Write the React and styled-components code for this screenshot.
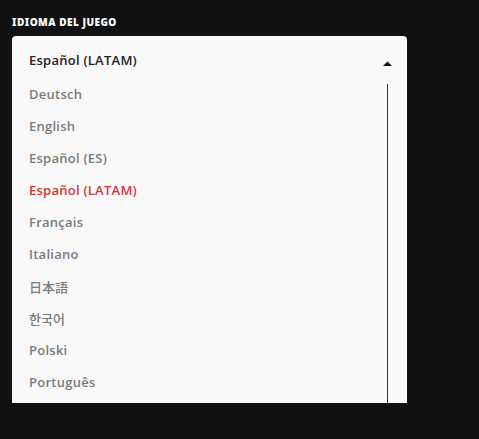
import React from "react";
import styled, { createGlobalStyle } from "styled-components";

const Global = createGlobalStyle`
  html, body { margin: 0; padding: 0; background: #111111; }
  body { width: 479px; height: 439px; overflow: hidden; font-family: "Open Sans", "Noto Sans", sans-serif; }
`;

const Page = styled.div`
  padding: 16px 72px 0 12px;
`;

const Label = styled.div`
  font-family: "Noto Sans", Inter, sans-serif;
  font-weight: 900;
  font-size: 10px;
  line-height: 12px;
  color: #ffffff;
  letter-spacing: 0.5px;
  margin-bottom: 8px;
`;

const Panel = styled.div`
  background: #f9f9f9;
  border-radius: 4px 4px 0 0;
  height: 367px;
  display: flex;
  flex-direction: column;
  overflow: hidden;
`;

const Header = styled.div`
  box-sizing: border-box;
  display: flex;
  align-items: flex-start;
  justify-content: space-between;
  height: 42px;
  padding: 15px 15px 0 17px;
  flex-shrink: 0;
`;

const Current = styled.span`
  font-size: 13px;
  line-height: 18px;
  font-weight: 600;
  letter-spacing: 0.25px;
  color: #222228;
`;

const Arrow = styled.svg`
  width: 9px;
  height: 5px;
  display: block;
  margin-top: 10px;
`;

const Body = styled.div`
  display: flex;
  flex: 1;
  min-height: 0;
`;

const List = styled.ul`
  list-style: none;
  margin: 0;
  padding: 0 0 0 17px;
  flex: 1;
`;

const Item = styled.li`
  height: 32px;
  display: flex;
  align-items: center;
  font-size: 13px;
  letter-spacing: ${(p) => (p.$cjk ? "0" : "0.25px")};
  color: ${(p) => (p.$active ? "#d13639" : "#7b7b7b")};
  font-family: ${(p) => (p.$cjk ? '"Noto Sans CJK JP", "Noto Sans CJK KR", sans-serif' : '"Open Sans", sans-serif')};
  font-weight: ${(p) => (p.$cjk ? 500 : 600)};
`;

const ScrollTrack = styled.div`
  width: 1px;
  background: #333;
  margin: 6px 19px 0 0;
`;

const langs = [
  { t: "Deutsch" },
  { t: "English" },
  { t: "Español (ES)" },
  { t: "Español (LATAM)", active: true },
  { t: "Français" },
  { t: "Italiano" },
  { t: "日本語", cjk: true },
  { t: "한국어", cjk: true },
  { t: "Polski" },
  { t: "Português" },
];

export default function App() {
  return (
    <>
      <Global />
      <Page>
        <Label>IDIOMA DEL JUEGO</Label>
        <Panel>
          <Header>
            <Current>Español (LATAM)</Current>
            <Arrow viewBox="0 0 9 5">
              <path d="M0 5 L4.5 0.5 L9 5 Z" fill="#111" />
            </Arrow>
          </Header>
          <Body>
            <List>
              {langs.map((l) => (
                <Item key={l.t} $active={l.active} $cjk={l.cjk}>
                  {l.t}
                </Item>
              ))}
            </List>
            <ScrollTrack />
          </Body>
        </Panel>
      </Page>
    </>
  );
}
